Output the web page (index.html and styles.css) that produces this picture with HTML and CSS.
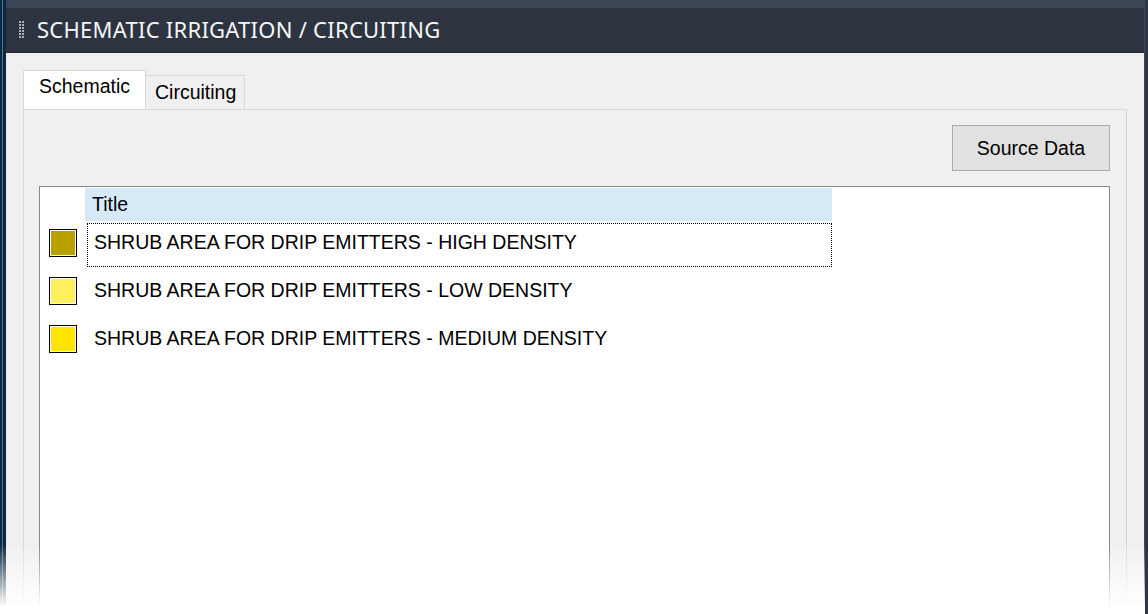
FILE: index.html
```html
<!DOCTYPE html>
<html lang="en">
<head>
    <meta charset="UTF-8">
    <meta name="viewport" content="width=device-width, initial-scale=1.0">
    <title>Schematic Irrigation / Circuiting</title>
    <link rel="stylesheet" href="styles.css">
</head>
<body>
    <div class="frame">
        <div class="titlebar">
            <svg class="grip" width="6" height="18" viewBox="0 0 6 18">
                <g fill="#aab2bf">
                    <rect x="0" y="0" width="2" height="2"/><rect x="3" y="0" width="2" height="2"/>
                    <rect x="0" y="3" width="2" height="2"/><rect x="3" y="3" width="2" height="2"/>
                    <rect x="0" y="6" width="2" height="2"/><rect x="3" y="6" width="2" height="2"/>
                    <rect x="0" y="9" width="2" height="2"/><rect x="3" y="9" width="2" height="2"/>
                    <rect x="0" y="12" width="2" height="2"/><rect x="3" y="12" width="2" height="2"/>
                    <rect x="0" y="15" width="2" height="2"/><rect x="3" y="15" width="2" height="2"/>
                </g>
            </svg>
            <span class="title">SCHEMATIC IRRIGATION / CIRCUITING</span>
        </div>

        <div class="content">
            <div class="tabs">
                <div class="tab active">Schematic</div>
                <div class="tab">Circuiting</div>
            </div>
            <div class="tabpanel">
                <div class="toolbar">
                    <button class="btn">Source Data</button>
                </div>
                <div class="listbox">
                    <div class="list-head">
                        <div class="head-cell">Title</div>
                    </div>
                    <div class="row">
                        <span class="swatch" style="background:#b9a100"></span>
                        <div class="cell focused">SHRUB AREA FOR DRIP EMITTERS - HIGH DENSITY</div>
                    </div>
                    <div class="row">
                        <span class="swatch" style="background:#fdf05d"></span>
                        <div class="cell">SHRUB AREA FOR DRIP EMITTERS - LOW DENSITY</div>
                    </div>
                    <div class="row">
                        <span class="swatch" style="background:#ffe500"></span>
                        <div class="cell">SHRUB AREA FOR DRIP EMITTERS - MEDIUM DENSITY</div>
                    </div>
                </div>
            </div>
        </div>
        <div class="fade"></div>
    </div>
</body>
</html>
```

FILE: styles.css
```css
html, body { margin: 0; height: 100%; overflow: hidden; }
body { background: #3a4556; font-family: "Liberation Sans", Arial, sans-serif; }

.frame { position: relative; height: 100%; box-sizing: border-box; padding: 8px 4px 0 6px; display: flex; flex-direction: column;
    background: linear-gradient(to right, #1c2330 0 2px, #0b8fd6 2px 3px, #1c2330 3px 6px, #3a4556 6px); }
.frame::after { content: ""; position: absolute; top: 0; right: 0; width: 3px; height: 100%; background: #2e3745; }

.titlebar { height: 44px; background: #2d3440; border-bottom: 1px solid #252b35; display: flex; align-items: center; padding-left: 13px; padding-bottom: 2px; box-sizing: border-box; height: 45px; }
.grip { margin-right: 12px; margin-top: 1px; }
.title { color: #f4f6f8; font-family: "Noto Sans", "Open Sans", sans-serif; font-size: 22px; letter-spacing: 0.25px; }

.content { flex: 1; background: #f0f0f0; padding: 17px 0 0 17px; display: flex; flex-direction: column; }

.tabs { display: flex; align-items: flex-end; height: 39px; }
.tab { height: 34px; box-sizing: border-box; padding: 5px 8px 0 9px; border: 1px solid #d9d9d9; border-bottom: none; border-left: none;
    background: #f0f0f0; font-size: 19.5px; color: #000; }
.tab.active { height: 39px; padding: 4px 15px 0 15px; background: #fff; border-left: 1px solid #d9d9d9; width: 123px; }

.tabpanel { flex: 1; border-left: 1px solid #d9d9d9; border-top: 1px solid #d9d9d9; border-right: 1px solid #d9d9d9; margin-right: 17px;
    padding: 15px 16px 0 15px; display: flex; flex-direction: column; }
.toolbar { display: flex; justify-content: flex-end; height: 46px; margin-bottom: 15px; }
.btn { width: 158px; height: 46px; background: #e1e1e1; border: 1px solid #adadad; font-family: "Liberation Sans", Arial, sans-serif;
    font-size: 19.5px; color: #000; padding: 0; }

.listbox { flex: 1; background: #fff; border: 1px solid #828790; border-bottom: none; padding-top: 1px; }
.list-head { display: flex; padding-left: 45px; }
.head-cell { width: 747px; height: 33px; background: #d5e9f7; box-sizing: border-box; padding: 5px 0 0 7px; font-size: 19.5px; }

.row { display: flex; height: 48px; }
.swatch { width: 26px; height: 26px; border: 1px solid #000; box-shadow: inset 0 0 0 1px #fff; margin: 8px 8px 0 9px; flex: none; }
.cell { width: 745px; margin: 2px 0 2px 2px; box-sizing: border-box; padding: 7px 0 0 6px; font-size: 19.5px; border: 1px solid transparent; }
.cell.focused { border: 1px dotted #000; }

.fade { position: absolute; left: 0; right: 0; bottom: 0; height: 70px; background: linear-gradient(to bottom, rgba(255,255,255,0), #fff 90%); }
```
